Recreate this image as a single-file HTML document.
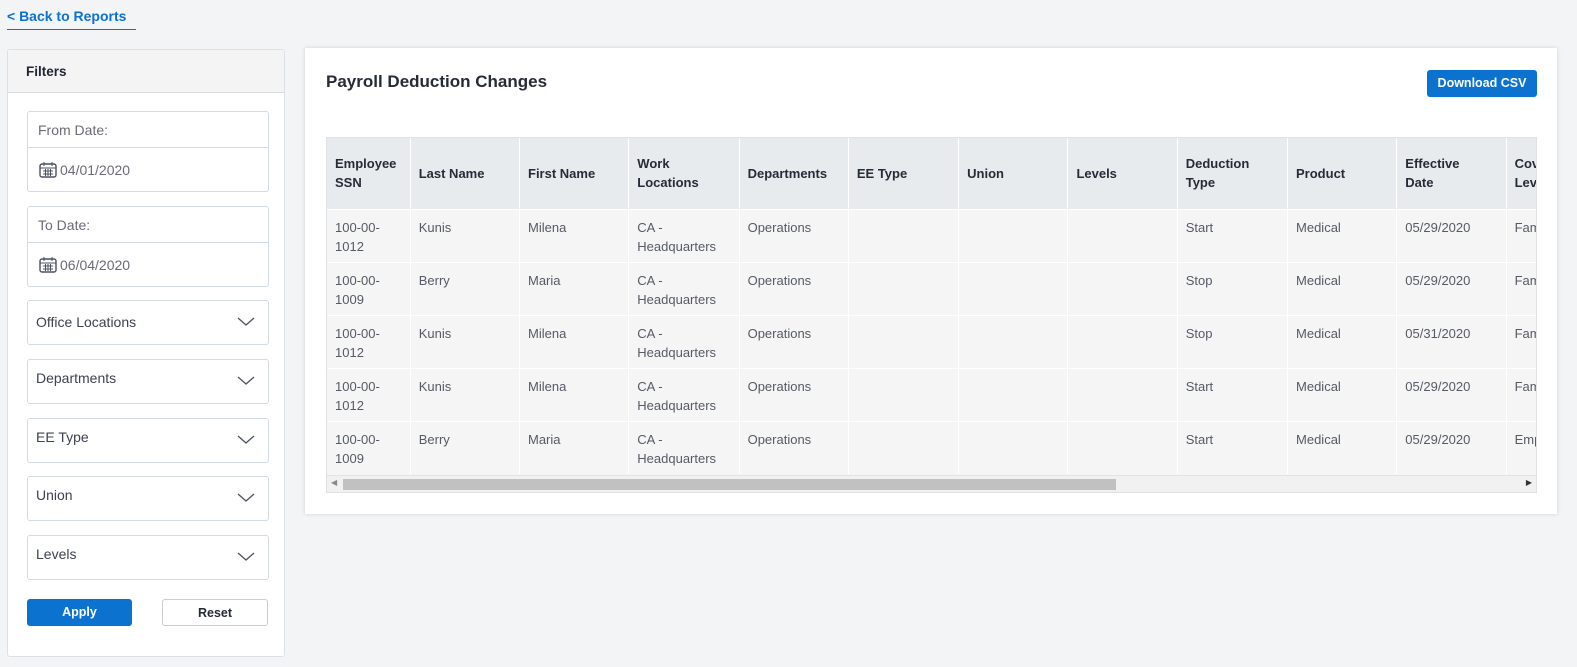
<!DOCTYPE html>
<html><head><meta charset="utf-8"><style>
*{box-sizing:border-box;margin:0;padding:0}
body{width:1577px;height:667px;background:#f3f4f6;font-family:"Liberation Sans",sans-serif;color:#3a3f4a;position:relative;overflow:hidden}
.back{position:absolute;left:7px;top:8px;font-size:14px;font-weight:bold;color:#0b72d0;border-bottom:1.5px solid #0b72d0;padding-bottom:5px;width:129px}
.side{position:absolute;left:7px;top:49px;width:278px;height:608px;background:#fff;border:1px solid #dde0e4;border-radius:3px}
.side .hd{height:43px;background:#f4f4f5;border-bottom:1px solid #dadde0;padding:14px 18px;font-weight:bold;font-size:13.5px;color:#1f2533}
.box{position:absolute;left:19px;width:242px;border:1px solid #d0dbe3;border-radius:3px;background:#fff}
.date .l{height:36px;border-bottom:1px solid #d0dbe3;padding:10px 10px;font-size:14px;color:#6b6b78}
.date .v{height:43px;padding:12px 10px;font-size:14px;color:#6b6b78;display:flex;align-items:center;gap:2px}
.sel{height:45px;padding:13px 8px;font-size:14px;color:#3d4151}
.sel svg{position:absolute;right:13px;top:16px}
.btn{position:absolute;top:549px;height:27px;border-radius:3px;font-size:12.5px;font-weight:bold;text-align:center;line-height:26px}
.card{position:absolute;left:305px;top:48px;width:1252px;height:466px;background:#fff;box-shadow:0 0 4px rgba(0,0,0,.15)}
.title{position:absolute;left:21px;top:24px;font-size:17px;font-weight:bold;color:#262b38}
.csv{position:absolute;left:1122px;top:22px;width:110px;height:27px;background:#0b72d0;color:#fff;border-radius:3px;font-size:12.5px;font-weight:bold;text-align:center;line-height:27px}
.tw{position:absolute;left:21px;top:89px;width:1211px;height:356px;border:1px solid #dfe2e5;overflow:hidden;background:#f5f5f5}
table{border-collapse:collapse;table-layout:fixed;width:1300px}
th{background:#e8ebed;height:71px;text-align:left;font-size:13px;color:#262b38;padding:0 8px;border-right:1.5px solid #fff;line-height:19px;font-weight:bold}
td{height:53px;vertical-align:top;padding:8px 8px 0;font-size:13px;color:#555a64;line-height:19.5px;border-right:1.5px solid #fff;border-top:1.5px solid #fff}
.sb{position:absolute;left:0;bottom:0;width:100%;height:17px;background:#f1f1f1;border-top:1px solid #e3e3e3}
.sb .th{position:absolute;left:16px;top:3px;width:773px;height:11px;background:#c1c1c1}
</style></head><body>
<div class="back">&lt; Back to Reports</div>
<div class="side">
<div class="hd">Filters</div>
<div class="box date" style="top:61px"><div class="l">From Date:</div><div class="v"><svg width="20" height="18" viewBox="0 0 20 18"><rect x="2" y="3" width="16" height="13" rx="2" fill="none" stroke="#4b5060" stroke-width="1.4"/><path d="M6 1v4M14 1v4M2 7h16M5 10h10M5 13h10M7.5 8v7M10 8v7M12.5 8v7" stroke="#4b5060" stroke-width="1"/></svg>04/01/2020</div></div>
<div class="box date" style="top:156px"><div class="l">To Date:</div><div class="v"><svg width="20" height="18" viewBox="0 0 20 18"><rect x="2" y="3" width="16" height="13" rx="2" fill="none" stroke="#4b5060" stroke-width="1.4"/><path d="M6 1v4M14 1v4M2 7h16M5 10h10M5 13h10M7.5 8v7M10 8v7M12.5 8v7" stroke="#4b5060" stroke-width="1"/></svg>06/04/2020</div></div>
<div class="box sel" style="top:250px">Office Locations<svg width="18" height="10"><path d="M1 1l8 7 8-7" fill="none" stroke="#4b5060" stroke-width="1.3"/></svg></div>
<div class="box sel" style="top:309px;padding-top:10px">Departments<svg width="18" height="10"><path d="M1 1l8 7 8-7" fill="none" stroke="#4b5060" stroke-width="1.3"/></svg></div>
<div class="box sel" style="top:368px;padding-top:10px">EE Type<svg width="18" height="10"><path d="M1 1l8 7 8-7" fill="none" stroke="#4b5060" stroke-width="1.3"/></svg></div>
<div class="box sel" style="top:426px;padding-top:10px">Union<svg width="18" height="10"><path d="M1 1l8 7 8-7" fill="none" stroke="#4b5060" stroke-width="1.3"/></svg></div>
<div class="box sel" style="top:485px;padding-top:10px">Levels<svg width="18" height="10"><path d="M1 1l8 7 8-7" fill="none" stroke="#4b5060" stroke-width="1.3"/></svg></div>
<div class="btn" style="left:19px;width:105px;background:#0b72d0;color:#fff">Apply</div>
<div class="btn" style="left:154px;width:106px;border:1px solid #c9cdd2;color:#262b38;background:#fff">Reset</div>
</div>
<div class="card">
<div class="title">Payroll Deduction Changes</div>
<div class="csv">Download CSV</div>
<div class="tw">
<table>
<colgroup><col style="width:83px"><col style="width:109px"><col style="width:109px"><col style="width:110px"><col style="width:109px"><col style="width:110px"><col style="width:109px"><col style="width:109px"><col style="width:110px"><col style="width:109px"><col style="width:109px"><col style="width:120px"></colgroup>
<tr><th>Employee SSN</th><th>Last Name</th><th>First Name</th><th>Work Locations</th><th>Departments</th><th>EE Type</th><th>Union</th><th>Levels</th><th>Deduction Type</th><th>Product</th><th>Effective<br>Date</th><th>Coverage<br>Level</th></tr>
<tr><td>100-00-1012</td><td>Kunis</td><td>Milena</td><td>CA - Headquarters</td><td>Operations</td><td></td><td></td><td></td><td>Start</td><td>Medical</td><td>05/29/2020</td><td>Family</td></tr>
<tr><td>100-00-1009</td><td>Berry</td><td>Maria</td><td>CA - Headquarters</td><td>Operations</td><td></td><td></td><td></td><td>Stop</td><td>Medical</td><td>05/29/2020</td><td>Family</td></tr>
<tr><td>100-00-1012</td><td>Kunis</td><td>Milena</td><td>CA - Headquarters</td><td>Operations</td><td></td><td></td><td></td><td>Stop</td><td>Medical</td><td>05/31/2020</td><td>Family</td></tr>
<tr><td>100-00-1012</td><td>Kunis</td><td>Milena</td><td>CA - Headquarters</td><td>Operations</td><td></td><td></td><td></td><td>Start</td><td>Medical</td><td>05/29/2020</td><td>Family</td></tr>
<tr><td>100-00-1009</td><td>Berry</td><td>Maria</td><td>CA - Headquarters</td><td>Operations</td><td></td><td></td><td></td><td>Start</td><td>Medical</td><td>05/29/2020</td><td>Employee</td></tr>
</table>
<div class="sb"><span style="position:absolute;left:4px;top:2px;font-size:8px;color:#888">◀</span><div class="th"></div><span style="position:absolute;right:4px;top:2px;font-size:8px;color:#333">▶</span></div>
</div>
</div>
</body></html>
